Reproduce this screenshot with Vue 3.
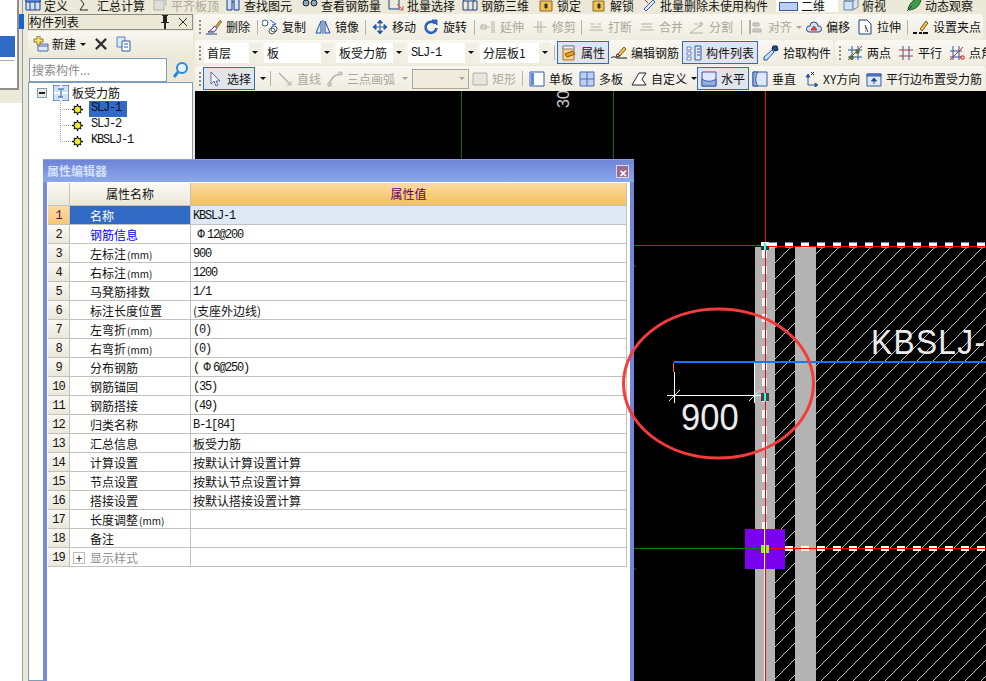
<script setup>
const G = '#b4b1a4'
const B = '#1f3f87'
const icons = {
  define: [['M1 3h14v11H1z', '#cfe0f5', B], ['M1 3h14v3H1z', '#5d8ad0', B], ['M5 6v8M10 6v8', 'none', B]],
  sum: [['M10 3H2l4 5-4 6h8', 'none', '#222']],
  flush: [['M2 4h10v10H2z', '#ddd', G], ['M5 2h9v8', 'none', G]],
  find: [['M2 2h5v12H2zM9 2h5v12H9z', '#cfe0f5', B], ['M7 6h2', 'none', B]],
  view: [['M1 7a3 3 0 1 0 6 0a3 3 0 1 0-6 0zM9 7a3 3 0 1 0 6 0a3 3 0 1 0-6 0z', '#8ab', '#223']],
  batch: [['M1 3h10v10H1z', 'none', B], ['M9 8l6 6M11 14h4v-4', 'none', '#c55']],
  rebar3d: [['M1 5h14v9H1z', 'none', B], ['M1 5l4-3h10l-4 3M6 5v9M11 5v9', 'none', B]],
  lock: [['M2 5h12v10H2z', '#f0c050', '#8a6a20'], ['M7 8h2v4H7z', '#333', '#333']],
  unlock: [['M2 5h11v10H2z', '#f0c050', '#8a6a20'], ['M7 8h2v4H7z', '#333', '#333']],
  batchdel: [['M3 13 12 4l2 2-9 9z', '#ddeaff', '#3a5aa0'], ['M2 2l5 5', 'none', '#d33'], ['M11 2l2 2', 'none', '#4a4']],
  top: [['M1 5l5-3h9l-5 3zM1 5h9v9H1z', '#cfe0f5', '#6a8ab0'], ['M10 5l5-3v9l-5 3z', '#e4e4dc', '#6a8ab0']],
  orbit: [['M2 13C4 6 9 2 15 2c0 6-4 11-11 12z', '#3f9a4a', '#1f5a2a'], ['M1 15l5-5', 'none', '#333']],
  del: [['M9.5 7.5 14 1.5l1.5 1.2-4.5 6z', '#f0c040', '#7a5a20'], ['M8.5 7 11 9.5 8 13H2c2.5-1 4.5-3.5 6.5-6z', '#f4f0ff', '#3a3a7a'], ['M4 11l3 2', 'none', '#d33'], ['M0 15h11', 'none', B]],
  copy: [['M0 4a3 3 0 1 0 6 0a3 3 0 1 0-6 0z', '#fff', '#3a5a8a'], ['M7 12a3 3 0 1 0 6 0a3 3 0 1 0-6 0z', '#fff', '#555'], ['M9 10a3 3 0 1 0 6 0a3 3 0 1 0-6 0z', 'none', '#3a5a8a'], ['M8 1l6 4-4 1', 'none', '#1f5fbf']],
  mirror: [['M6 2 1 14h5zM10 2l5 12h-5z', '#dfe8fa', '#1f4fa8'], ['M8 1v14', 'none', '#1f4fa8']],
  move: [['M8 1v14M1 8h14M8 1 5.5 4h5zM8 15l-2.5-3h5zM1 8l3-2.5v5zM15 8l-3-2.5v5z', '#2a5aa8', '#2a5aa8']],
  rotate: [['M12 4.5A5.5 5.5 0 1 0 13.5 9', 'none', '#2a62c0', 2.6], ['M9 1h5v5z', '#2a62c0', '#2a62c0']],
  extend: [['M1 6h5v4H1zM1 8h9', 'none', G], ['M12 2v12M14 2v12', 'none', G]],
  trim: [['M1 8h14', 'none', G], ['M6 2v12M9 2v12', 'none', G]],
  brk: [['M2 5h4M9 5h4M1 11h14M3 8h10', 'none', G]],
  merge: [['M2 5h11M1 11h14M3 8h10', 'none', G]],
  split: [['M1 14h13M1 14 13 5M5 5h4', 'none', G], ['M11 3l3 2-3 3z', '#ddd', G]],
  align: [['M2 1v14', 'none', G, 2], ['M5 4h6v3H5zM5 10h8v3H5z', '#ccc', G]],
  offset: [['M3 13a3 3 0 0 1 1-6 4 4 0 0 1 8 0 3 3 0 0 1 1 6z', '#cfe0f5', '#2a4a80'], ['M5 11l3-4 3 4z', '#e05040', '#c03020']],
  stretch: [['M2 1h8l4 4v10H2z', '#fff', '#1f3f87'], ['M8 6l3 7M8 9h1M8 12h1', 'none', '#333']],
  setgrip: [['M7 10 13 2l2 2-6 8z', '#f0c050', '#7a5a20'], ['M0 14h4M6 14h3', 'none', '#111', 2], ['M10 14h5', 'none', '#111', 2]],
  prop: [['M2 1h11v14H2z', '#f7d080', '#9a7a40'], ['M2 1h11v3H2z', '#eee', '#888'], ['M4 9l8-3 2 3-8 3z', '#e8a030', '#885010']],
  edit: [['M7 9 13 2l2 2-6 7z', '#f0c050', '#7a5a20'], ['M6 9l3 2-4 1z', '#fff', '#333'], ['M0 13c2-2 4-1 6 0h10', 'none', '#111']],
  list: [['M9 1h6v14H9z', '#dfe8fa', '#3a5aa0'], ['M1 2h4v3H1zM1 7h4v3H1zM1 12h4v3H1z', '#fff', '#4a6ab0', 0.8], ['M11 4h3M11 7h3M11 10h3', 'none', '#3a5aa0']],
  pick: [['M10 1h4l1 4-3 1-3-2z', '#1f4f90', '#123'], ['M9 5l2 2-7 8H1v-3z', '#bfe0f8', '#2a5aa0']],
  twopt: [['M1 5h14M1 12h14M5 1v14M11 1v14', 'none', '#2a5aa0'], ['M1 15 15 1', 'none', '#d22'], ['M9 5h3v3H9zM3 11h3v3H3z', '#4a8a2a', '#3a6a2a']],
  par: [['M1 5h14M1 11h14', 'none', '#c33'], ['M5 1v14M11 1v14', 'none', '#2a5aa0']],
  ptangle: [['M1 6h12M1 12h12M4 1v14M10 1v14', 'none', '#2a5aa0'], ['M1 15 14 2', 'none', '#d22'], ['M12 11h3v3h-3z', 'none', '#d22']],
  select: [['M4 1v12l3-3 2 5 2-1-2-4h4z', '#fff', '#5a6aa0']],
  line: [['M2 2l11 11', 'none', G, 1.4], ['M10 14h4v-4', 'none', G]],
  arc: [['M2 15C3 8 7 4 13 3', 'none', G, 1.6], ['M12 1h3v3h-3zM1 12h3v3H1z', '#ddd', G]],
  rect: [['M1 2h14v12H1z', '#e6e6e0', G]],
  single: [['M1 1h14v14H1z', '#fff', '#2a5ab0'], ['M2 2h3v12H2z', '#5a8ad8', 'none']],
  multi: [['M1 1h14v14H1z', '#bcd0f0', '#4a6ab0'], ['M8 1v14M1 8h14', 'none', '#4a6ab0']],
  custom: [['M1 14 8 2h7L11 8l4 6z', '#fff', '#222']],
  horiz: [['M1 1h14v14H1z', '#dfe8fa', '#3a5aa0'], ['M1 8c4 3 10 3 14 0v7H1z', '#8fb0e0', '#3a5aa0']],
  vert: [['M1 1h14v14H1z', '#dfe8fa', '#3a5aa0'], ['M6 1C3 5 3 11 6 15H1V1z', '#8fb0e0', '#3a5aa0']],
  xy: [['M5 14V5M5 14h9', 'none', '#2a5aa0'], ['M5 3 3 6h4zM15 14l-3-2v4z', '#2a5aa0', '#2a5aa0'], ['M8 1l3 3M11 1 8 4', 'none', '#222']],
  parbar: [['M1 3h14v12H1z', '#dfe8fa', '#3a5aa0'], ['M1 3h14v2H1z', '#5a8ad8', '#3a5aa0'], ['M8 13V8M5.5 10 8 7l2.5 3z', '#2a4a90', '#2a4a90']],
  newItem: [['M5 8h10v7H5z', '#dfe8fa', '#4a6ab0'], ['M5 10h10', 'none', '#4a6ab0'], ['M1 3h3V0h3v3h3v3H7v3H4V6H1z', '#f5e070', '#8a7a30']],
  close: [['M2 2l11 11M13 2 2 13', 'none', '#333', 2.4]],
  paste: [['M1 1h8v10H1z', '#dfe8fa', '#5a80c0'], ['M6 5h8v10H6z', '#fff', '#2a5ab0'], ['M8 8h4M8 11h4', 'none', '#2a5ab0']],
  search: [['M5 6a5 5 0 1 0 10 0a5 5 0 1 0-10 0z', '#e8f4ff', '#2a8ad8', 2], ['M6 10l-4 5', 'none', '#2a8ad8', 3]],
  pin: [['M5 1h6v1h-1v6h2v1H9v6H7V9H4V8h2V2H5z', '#222', 'none']],
  x: [['M2 2l8 8M10 2l-8 8', 'none', '#333', 1]],
  treeRoot: [['M0 0h16v16H0z', '#cfe0f5', '#1f4fa8'], ['M8 0v16M1 8h14', 'none', '#fff', 2], ['M5 4h6M8 4v8M5 12h5', 'none', '#1f4fa8']],
  gear: [['M2 2l7 7M9 2 2 9M5.5 0v11M0 5.5h11', 'none', '#111', 1.5], ['M2 5.5a3.5 3.5 0 1 0 7 0a3.5 3.5 0 1 0-7 0z', '#f5ee20', '#111']]
}

const tool = (i, t, w, off) => ({ kind: 'tool', i, t, w, off })
const sep = (w) => ({ kind: 'sep', w })
const combo = (t, w, mono) => ({ kind: 'combo', t, w, mono })
const caret = (w, off) => ({ kind: 'caret', w, off })

const topRow = [
  tool('define', '定义', 53), tool('sum', '汇总计算', 74), tool('flush', '平齐板顶', 73, true), tool('find', '查找图元', 77),
  tool('view', '查看钢筋量', 86), tool('batch', '批量选择', 74), tool('rebar3d', '钢筋三维', 76), tool('lock', '锁定', 53),
  tool('unlock', '解锁', 50), tool('batchdel', '批量删除未使用构件', 135), combo('二维', 67), tool('top', '俯视', 63), tool('orbit', '动态观察', 80)
]

const rows = [
  {
    cls: 'row1',
    bars: [{
      start: 199,
      items: [
        tool('del', '删除', 51), sep(5), tool('copy', '复制', 53), tool('mirror', '镜像', 50), sep(7), tool('move', '移动', 51),
        tool('rotate', '旋转', 51), sep(6), tool('extend', '延伸', 52, true), tool('trim', '修剪', 49, true), sep(7),
        tool('brk', '打断', 51, true), tool('merge', '合并', 50, true), tool('split', '分割', 52, true), sep(7),
        tool('align', '对齐', 45, true), caret(13, true), tool('offset', '偏移', 51), tool('stretch', '拉伸', 50), sep(6), tool('setgrip', '设置夹点', 70)
      ]
    }]
  },
  {
    cls: 'row2',
    bars: [
      {
        start: 199,
        items: [
          combo('首层', 60), combo('板', 72), combo('板受力筋', 72), combo('SLJ-1', 72, true), combo('分层板1', 74), sep(4),
          { ...tool('prop', '属性', 53), active: true }, tool('edit', '编辑钢筋', 72),
          { ...tool('list', '构件列表', 80), active: true }, tool('pick', '拾取构件', 70)
        ]
      },
      {
        start: 839,
        items: [tool('twopt', '两点', 51), tool('par', '平行', 51), tool('ptangle', '点角度', 60)]
      }
    ]
  },
  {
    cls: 'row3',
    bars: [{
      start: 199,
      items: [
        { ...tool('select', '选择', 53), active: true }, caret(13), sep(7), tool('line', '直线', 50, true), tool('arc', '三点画弧', 72, true), caret(13, true),
        { kind: 'combo', t: '', w: 60, off: true }, tool('rect', '矩形', 50, true), sep(7), tool('single', '单板', 50), tool('multi', '多板', 52),
        tool('custom', '自定义', 57), caret(10), { ...tool('horiz', '水平', 54), active: true }, tool('vert', '垂直', 51), tool('xy', 'XY方向', 63), tool('parbar', '平行边布置受力筋', 119)
      ]
    }]
  }
]

const treeItems = ['SLJ-1', 'SLJ-2', 'KBSLJ-1']

const propRows = [
  { name: '名称', val: 'KBSLJ-1', mono: true },
  { name: '钢筋信息', val: 'Φ12@200', mono: true, link: true },
  { name: '左标注', unit: '(mm)', val: '900', mono: true },
  { name: '右标注', unit: '(mm)', val: '1200', mono: true },
  { name: '马凳筋排数', val: '1/1', mono: true },
  { name: '标注长度位置', val: '(支座外边线)' },
  { name: '左弯折', unit: '(mm)', val: '(0)', mono: true },
  { name: '右弯折', unit: '(mm)', val: '(0)', mono: true },
  { name: '分布钢筋', val: '(Φ6@250)', mono: true },
  { name: '钢筋锚固', val: '(35)', mono: true },
  { name: '钢筋搭接', val: '(49)', mono: true },
  { name: '归类名称', val: 'B-1[84]', mono: true },
  { name: '汇总信息', val: '板受力筋' },
  { name: '计算设置', val: '按默认计算设置计算' },
  { name: '节点设置', val: '按默认节点设置计算' },
  { name: '搭接设置', val: '按默认搭接设置计算' },
  { name: '长度调整', unit: '(mm)', val: '' },
  { name: '备注', val: '' },
  { name: '显示样式', val: '', group: true }
]
</script>

<template>
  <div class="app">
    <!-- 左侧被遮住的导航 -->
    <div class="side">
      <div class="side-head"><span class="side-tab"></span></div>
      <div class="side-body"></div>
    </div>
    <div class="menu">
      <span class="menu-active"></span>
      <span class="menu-line"></span>
    </div>

    <!-- 构件列表 -->
    <div class="panel">
      <div class="panel-title">
        <span class="panel-name">构件列表</span>
        <svg class="pin" width="16" height="16" viewBox="0 0 16 16"><path v-for="(p, n) in icons.pin" :key="n" :d="p[0]" :fill="p[1]" :stroke="p[2]" /></svg>
        <svg class="pin" width="12" height="12" viewBox="0 0 12 12"><path v-for="(p, n) in icons.x" :key="n" :d="p[0]" :fill="p[1]" :stroke="p[2]" /></svg>
      </div>
      <div class="panel-tools">
        <svg width="16" height="16" viewBox="0 0 16 16"><path v-for="(p, n) in icons.newItem" :key="n" :d="p[0]" :fill="p[1]" :stroke="p[2]" /></svg>
        <span class="panel-new">新建</span>
        <span class="caret"></span>
        <svg class="tool-x" width="14" height="14" viewBox="0 0 15 15"><path v-for="(p, n) in icons.close" :key="n" :d="p[0]" :fill="p[1]" :stroke="p[2]" :stroke-width="p[3]" /></svg>
        <svg class="tool-paste" width="16" height="16" viewBox="0 0 16 16"><path v-for="(p, n) in icons.paste" :key="n" :d="p[0]" :fill="p[1]" :stroke="p[2]" /></svg>
      </div>
      <div class="panel-search">
        <span class="search-input">搜索构件...</span>
        <svg width="16" height="16" viewBox="0 0 16 16"><path v-for="(p, n) in icons.search" :key="n" :d="p[0]" :fill="p[1]" :stroke="p[2]" :stroke-width="p[3]" /></svg>
      </div>
      <div class="tree">
        <div class="tree-root">
          <span class="expander"></span>
          <svg width="16" height="16" viewBox="0 0 16 16"><path v-for="(p, n) in icons.treeRoot" :key="n" :d="p[0]" :fill="p[1]" :stroke="p[2]" :stroke-width="p[3]" /></svg>
          <span class="tree-root-name">板受力筋</span>
        </div>
        <div class="tree-children">
          <div v-for="(name, idx) in treeItems" :key="name" class="tree-item">
            <span class="tree-dots"></span>
            <svg width="11" height="11" viewBox="0 0 11 11"><path v-for="(p, n) in icons.gear" :key="n" :d="p[0]" :fill="p[1]" :stroke="p[2]" :stroke-width="p[3]" /></svg>
            <span class="tree-label" :class="{ selected: idx === 0 }">{{ name }}</span>
          </div>
        </div>
      </div>
    </div>

    <!-- 工具栏和绘图区 -->
    <div class="main">
      <div class="top-row">
        <div v-for="it in topRow" :key="it.t" class="item" :class="{ off: it.off }" :style="{ width: it.w + 'px' }">
          <span v-if="it.kind === 'combo'" class="top-combo"><span class="top-combo-icon"></span>{{ it.t }}</span>
          <template v-else>
            <svg width="16" height="16" viewBox="0 0 16 16"><path v-for="(p, n) in icons[it.i]" :key="n" :d="p[0]" :fill="p[1]" :stroke="p[2]" /></svg>
            <span class="item-text">{{ it.t }}</span>
          </template>
        </div>
      </div>

      <div v-for="row in rows" :key="row.cls" class="tb-row" :class="row.cls">
        <div v-for="bar in row.bars" :key="bar.start" class="bar">
          <span class="grip"></span>
          <template v-for="(it, idx) in bar.items" :key="idx">
            <span v-if="it.kind === 'sep'" class="sep-wrap" :style="{ width: it.w + 'px' }"><span class="sep"></span></span>
            <span v-else-if="it.kind === 'caret'" class="caret-wrap" :class="{ off: it.off }" :style="{ width: it.w + 'px' }"><span class="caret"></span></span>
            <span v-else-if="it.kind === 'combo'" class="combo-wrap" :style="{ width: it.w + 'px' }">
              <span class="combo" :class="{ 'combo-off': it.off, mono: it.mono }">
                <span class="combo-text">{{ it.t }}</span>
                <span class="combo-btn"><span class="caret"></span></span>
              </span>
            </span>
            <div v-else class="item" :class="{ off: it.off }" :style="{ width: it.w + 'px' }">
              <div class="item-in" :class="{ active: it.active }">
                <svg width="16" height="16" viewBox="0 0 16 16"><path v-for="(p, n) in icons[it.i]" :key="n" :d="p[0]" :fill="p[1]" :stroke="p[2]" :stroke-width="p[3] || 1" /></svg>
                <span class="item-text">{{ it.t }}</span>
              </div>
            </div>
          </template>
        </div>
      </div>

      <div class="canvas">
        <svg class="drawing" width="791" height="590" viewBox="195 91 791 590">
          <defs>
            <pattern id="hatch" patternUnits="userSpaceOnUse" width="16" height="16">
              <path d="M-2 16 16 -2M14 16 16 14" stroke="#c6c6c6" stroke-width="1" fill="none" shape-rendering="crispEdges" />
            </pattern>
          </defs>
          <path d="M461.5 91V245M613.5 91V245" stroke="#0b6b0b" fill="none" />
          <text x="569" y="108" transform="rotate(-90 569 108)" class="cad-small">300</text>

          <rect x="775" y="248" width="211" height="433" fill="url(#hatch)" />
          <rect x="755" y="247" width="20" height="434" fill="#b3b3b3" />
          <rect x="795" y="247" width="21" height="434" fill="#b3b3b3" />

          <path d="M613 245.5H761M633 548.5H761" stroke="#0b7b0b" fill="none" />
          <path d="M634 266h2M634 569h2" stroke="#0b7b0b" fill="none" />
          <path d="M769 245H986M785 548.5H986" stroke="#fff" stroke-width="5" stroke-dasharray="8 8" fill="none" />
          <path d="M769 246.5H986M769 548.5H986" stroke="#f00" fill="none" />
          <path d="M764.5 250V529" stroke="#fff" stroke-width="5" stroke-dasharray="8 8" fill="none" />
          <path d="M764.5 529V681" stroke="#fff" fill="none" />
          <path d="M765.5 91V681" stroke="#f00" fill="none" />

          <path d="M674 362H986" stroke="#0a7cff" stroke-width="2" fill="none" />
          <path d="M673.5 363V372" stroke="#e87a10" fill="none" />
          <path d="M674.5 372V403M754.5 363V403M667 395.5H761" stroke="#fff" fill="none" />
          <path d="M669 401l11-11M749 401l11-11" stroke="#ddd" fill="none" />
          <rect x="761" y="393" width="8" height="8" fill="#444" />
          <rect x="764" y="393" width="2" height="8" fill="#3fe" />
          <rect x="761" y="242" width="8" height="4" fill="#fff" />
          <rect x="761" y="246" width="8" height="4" fill="#333" />
          <rect x="764" y="243" width="2" height="7" fill="#3fe" />

          <rect x="745" y="529" width="40" height="40" fill="#7b00ee" />
          <rect x="761" y="545" width="8" height="8" fill="#7fff20" />
          <path d="M764.5 529V569" stroke="#fff" fill="none" />
          <path d="M765.5 529V569M769 548.5H785" stroke="#f00" fill="none" />
          <path d="M745 548.5H761" stroke="#0b7b0b" fill="none" />

          <text transform="translate(871 354) scale(.88 1)" class="cad-big">KBSLJ-1</text>
          <text transform="translate(681 430) scale(.96 1)" class="cad-num">900</text>
        </svg>
      </div>
    </div>

    <!-- 属性编辑器 -->
    <div class="win">
      <div class="win-title">
        <span>属性编辑器</span>
        <span class="win-close">✕</span>
      </div>
      <div class="win-body">
        <div class="grid-row grid-head">
          <div class="cell cell-num"></div>
          <div class="cell cell-name">属性名称</div>
          <div class="cell cell-val">属性值</div>
        </div>
        <div v-for="(r, idx) in propRows" :key="r.name" class="grid-row" :class="{ current: idx === 0 }">
          <div class="cell cell-num">{{ idx + 1 }}</div>
          <div class="cell cell-name" :class="{ link: r.link, group: r.group }">
            <span v-if="r.group" class="plus">+</span>
            <span>{{ r.name }}</span>
            <span v-if="r.unit" class="unit">{{ r.unit }}</span>
          </div>
          <div class="cell cell-val" :class="{ mono: r.mono }">
            <template v-for="(part, n) in r.val.split('Φ')" :key="n"><span v-if="n" class="rebar">Φ</span>{{ part }}</template>
          </div>
        </div>
      </div>
    </div>

    <!-- 红圈批注，盖在属性窗口上面 -->
    <svg class="note" width="200" height="160" viewBox="0 0 200 160">
      <ellipse cx="98.5" cy="78.5" rx="95" ry="74.5" fill="none" stroke="#f53b3b" stroke-width="3" />
    </svg>
  </div>
</template>

<style>
html,
body {
  margin: 0;
  overflow: hidden;
  background: #ece9d8;
}
</style>

<style scoped>
.app {
  position: relative;
  display: flex;
  width: 986px;
  height: 681px;
  overflow: hidden;
  background: #ece9d8;
  font-family: "Noto Sans CJK SC", "Liberation Sans", sans-serif;
  font-size: 12px;
  line-height: 14px;
  color: #111;
}
.side {
  display: flex;
  flex-direction: column;
  flex: none;
  width: 22px;
  border-right: 1px solid #8c9fb5;
}
.side-head {
  position: relative;
  flex: none;
  height: 103px;
  background: #ece9d8;
}
.side-tab {
  position: absolute;
  top: 14px;
  left: 18px;
  width: 6px;
  height: 15px;
  background: #1763d0;
}
.side-body {
  flex: 1;
  background: #fff;
}
.menu {
  position: absolute;
  top: 0;
  left: 0;
  width: 17px;
  height: 88px;
  background: #fff;
  border-right: 2px solid #8f8f88;
  border-bottom: 2px solid #8f8f88;
}
.menu-active {
  position: absolute;
  top: 36px;
  left: 0;
  width: 15px;
  height: 21px;
  background: #316ac5;
}
.menu-line {
  position: absolute;
  top: 60px;
  left: 0;
  width: 14px;
  height: 1px;
  background: #aaa;
}
.panel {
  display: flex;
  flex-direction: column;
  flex: none;
  width: 165px;
  margin: 14px 2px 0 5px;
}
.panel-title {
  display: flex;
  align-items: center;
  flex: none;
  gap: 4px;
  height: 14px;
  border: 1px solid #8b8b84;
  padding-right: 3px;
}
.panel-name {
  flex: 1;
  font-size: 12.5px;
}
.pin {
  flex: none;
}
.panel-tools {
  display: flex;
  align-items: center;
  flex: none;
  height: 26px;
  margin-top: 1px;
  padding-left: 5px;
  background: linear-gradient(#f8f7f2, #ece9d8);
}
.panel-new {
  margin: 0 4px 0 3px;
}
.tool-x {
  margin-left: 8px;
}
.tool-paste {
  margin-left: 8px;
}
.panel-search {
  display: flex;
  align-items: center;
  flex: none;
  gap: 5px;
  height: 25px;
}
.search-input {
  width: 134px;
  height: 22px;
  margin-left: 1px;
  padding-left: 2px;
  line-height: 21px;
  color: #8a8a8a;
  background: #fff;
  border: 1px solid #7f9db9;
}
.tree {
  flex: 1;
  background: #fff;
  border: 1px solid #7f9db9;
  padding-top: 2px;
}
.tree-root {
  display: flex;
  align-items: center;
  height: 16px;
  padding-left: 8px;
}
.tree-root svg {
  margin-left: 6px;
}
.tree-root-name {
  margin-left: 3px;
}
.expander {
  position: relative;
  width: 8px;
  height: 8px;
  background: #ece9d8;
  border: 1px solid #7f9db9;
}
.expander::after {
  content: "";
  position: absolute;
  top: 3px;
  left: 1px;
  width: 6px;
  height: 2px;
  background: #222;
}
.tree-item {
  display: flex;
  align-items: center;
  height: 16px;
  padding-left: 31px;
}
.tree-dots {
  width: 12px;
  height: 16px;
  background:
    repeating-linear-gradient(#a5a58a 0 1px, transparent 1px 2px) 0 0 / 1px 100% no-repeat,
    repeating-linear-gradient(90deg, #a5a58a 0 1px, transparent 1px 2px) 0 8px / 12px 1px no-repeat;
}
.tree-item:last-child .tree-dots {
  background:
    repeating-linear-gradient(#a5a58a 0 1px, transparent 1px 2px) 0 0 / 1px 8px no-repeat,
    repeating-linear-gradient(90deg, #a5a58a 0 1px, transparent 1px 2px) 0 8px / 12px 1px no-repeat;
}
.tree-label {
  height: 16px;
  margin-left: 6px;
  padding: 0 6px 0 2px;
  line-height: 15px;
  font-family: "Liberation Mono", monospace;
  letter-spacing: -1.2px;
}
.tree-label.selected {
  background: #316ac5;
}
.main {
  display: flex;
  flex-direction: column;
  flex: 1;
  min-width: 0;
}
.top-row {
  position: absolute;
  top: 0;
  left: 25px;
  display: flex;
  align-items: flex-end;
  height: 12px;
  overflow: hidden;
}
.top-row .item {
  align-items: flex-end;
  flex: none;
  height: 12px;
  gap: 3px;
}
.top-row .item-text {
  height: 12px;
  line-height: 12px;
}
.top-combo {
  display: flex;
  align-items: center;
  box-sizing: border-box;
  width: 62px;
  height: 12px;
  padding-left: 3px;
  background: #fff;
}
.top-combo-icon {
  width: 19px;
  height: 9px;
  margin-right: 3px;
  background: #bcd0f0;
  border: 1px solid #3a5aa0;
  box-sizing: border-box;
}
.tb-row {
  display: flex;
  flex: none;
  overflow: hidden;
}
.row1 {
  height: 26px;
  margin-top: 14px;
}
.row2 {
  height: 25px;
}
.row2 .bar:last-child {
  margin-left: 2px;
}
.row3 {
  height: 25px;
  padding-top: 1px;
}
.bar {
  display: flex;
  align-items: center;
  flex: none;
  background: linear-gradient(#f9f8f3, #efecdf);
  border-radius: 3px;
}
.grip {
  flex: none;
  width: 2px;
  height: 14px;
  margin: 0 3px 0 4px;
  background: repeating-linear-gradient(#8b8b84 0 2px, transparent 2px 4px);
}
.row1 .grip {
  margin-right: 5px;
}
.row2 .bar:last-child .grip {
  margin-right: 6px;
}
.sep-wrap {
  display: flex;
  align-items: center;
  flex: none;
  height: 100%;
}
.sep {
  width: 1px;
  height: 15px;
  background: #b9b6a6;
}
.caret-wrap {
  display: flex;
  align-items: center;
  flex: none;
  padding-left: 3px;
  box-sizing: border-box;
}
.caret-wrap.off .caret {
  border-top-color: #a8a598;
}
.caret {
  display: inline-block;
  width: 0;
  height: 0;
  border-left: 3px solid transparent;
  border-right: 3px solid transparent;
  border-top: 3px solid #111;
}
.combo-wrap {
  flex: none;
}
.combo {
  display: flex;
  align-items: center;
  justify-content: space-between;
  height: 20px;
  margin-right: 3px;
  background: #fff;
}
.combo-text {
  padding-left: 3px;
}
.combo.mono .combo-text {
  font-family: "Liberation Mono", monospace;
  letter-spacing: -1.2px;
}
.combo-btn {
  display: flex;
  align-items: center;
  justify-content: center;
  width: 12px;
  height: 100%;
  background: #f1efe4;
}
.combo-off {
  border: 1px solid #aca899;
  background: #efecdf;
  box-sizing: border-box;
}
.combo-off .caret {
  border-top-color: #a8a598;
}
.combo-off .combo-btn {
  background: transparent;
}
.item {
  display: flex;
  align-items: center;
  flex: none;
}
.item-in {
  display: flex;
  align-items: center;
  gap: 4px;
  white-space: nowrap;
}
.item-in.active {
  height: 21px;
  padding: 0 3px;
  margin-left: -1px;
  background: #e1e4ea;
  border: 1px solid #316ac5;
}
.off .item-text {
  color: #aca899;
}
.item-text {
  white-space: nowrap;
}
.canvas {
  flex: 1;
  background: #000;
}
.drawing {
  display: block;
}
.cad-small {
  font-family: "Liberation Sans", sans-serif;
  font-size: 16px;
  fill: #cfcfcf;
}
.cad-big {
  font-family: "Liberation Sans", sans-serif;
  font-size: 36px;
  letter-spacing: 1.5px;
  fill: #ececec;
}
.cad-num {
  font-family: "Liberation Sans", sans-serif;
  font-size: 36px;
  fill: #ececec;
}
.win {
  position: absolute;
  top: 159px;
  left: 43px;
  display: flex;
  flex-direction: column;
  width: 583px;
  height: 522px;
  padding: 0 4px;
  background: linear-gradient(90deg, #7a8ae0, #7484da);
  border-top: 1px solid #8aa0e8;
}
.win-title {
  display: flex;
  align-items: center;
  justify-content: space-between;
  flex: none;
  height: 22px;
  margin: 0 -4px;
  padding: 0 5px 0 4px;
  background: linear-gradient(#6e84d8, #8aa8ea);
  color: #d4e0f8;
  font-weight: 700;
}
.win-close {
  width: 13px;
  height: 13px;
  line-height: 13px;
  text-align: center;
  font-size: 10px;
  color: #fff;
  background: #a0688c;
  border: 1px solid #d8d8ee;
  box-sizing: border-box;
}
.win-body {
  flex: 1;
  padding: 1px 3px 0 1px;
  background: #fff;
}
.grid-row {
  display: grid;
  grid-template-columns: 22px 121px 1fr;
  height: 19px;
}
.grid-head {
  height: 23px;
}
.cell {
  box-sizing: border-box;
  height: 100%;
  padding-top: 3px;
  border-right: 1px solid #c2c2bc;
  border-bottom: 1px solid #c2c2bc;
  white-space: nowrap;
}
.cell-num {
  text-align: center;
  font-family: "Liberation Mono", monospace;
  letter-spacing: -1px;
  background: linear-gradient(#f9f8f2, #ebe8da);
}
.cell-name {
  padding-left: 20px;
}
.cell-val {
  padding-left: 2px;
}
.cell-val.mono {
  font-family: "Liberation Mono", monospace;
  letter-spacing: -1.2px;
}
.rebar {
  display: inline-block;
  width: 12px;
  margin-left: 2px;
  text-align: center;
  letter-spacing: 0;
}
.unit {
  margin-left: 1px;
  font-size: 10px;
}
.link {
  color: #0000ff;
}
.group {
  position: relative;
  color: #8f8f8f;
}
.plus {
  position: absolute;
  top: 4px;
  left: 3px;
  width: 10px;
  height: 10px;
  line-height: 9px;
  text-align: center;
  color: #222;
  border: 1px solid #bbb;
}
.grid-head .cell {
  padding-top: 4px;
}
.grid-head .cell-name {
  padding-left: 0;
  text-align: center;
  background: linear-gradient(#fbfaf5, #ebe8d8);
}
.grid-head .cell-val {
  padding-left: 0;
  text-align: center;
  color: #660066;
  background: linear-gradient(#fbdc9e, #f2c061);
}
.current .cell-num {
  color: #660066;
  background: linear-gradient(#fcdca0, #f8c878);
}
.current .cell-name {
  color: #fff;
  background: #316ac5;
}
.current .cell-val {
  background: #dfe8f5;
}
.note {
  position: absolute;
  top: 305px;
  left: 620px;
  pointer-events: none;
}
</style>
